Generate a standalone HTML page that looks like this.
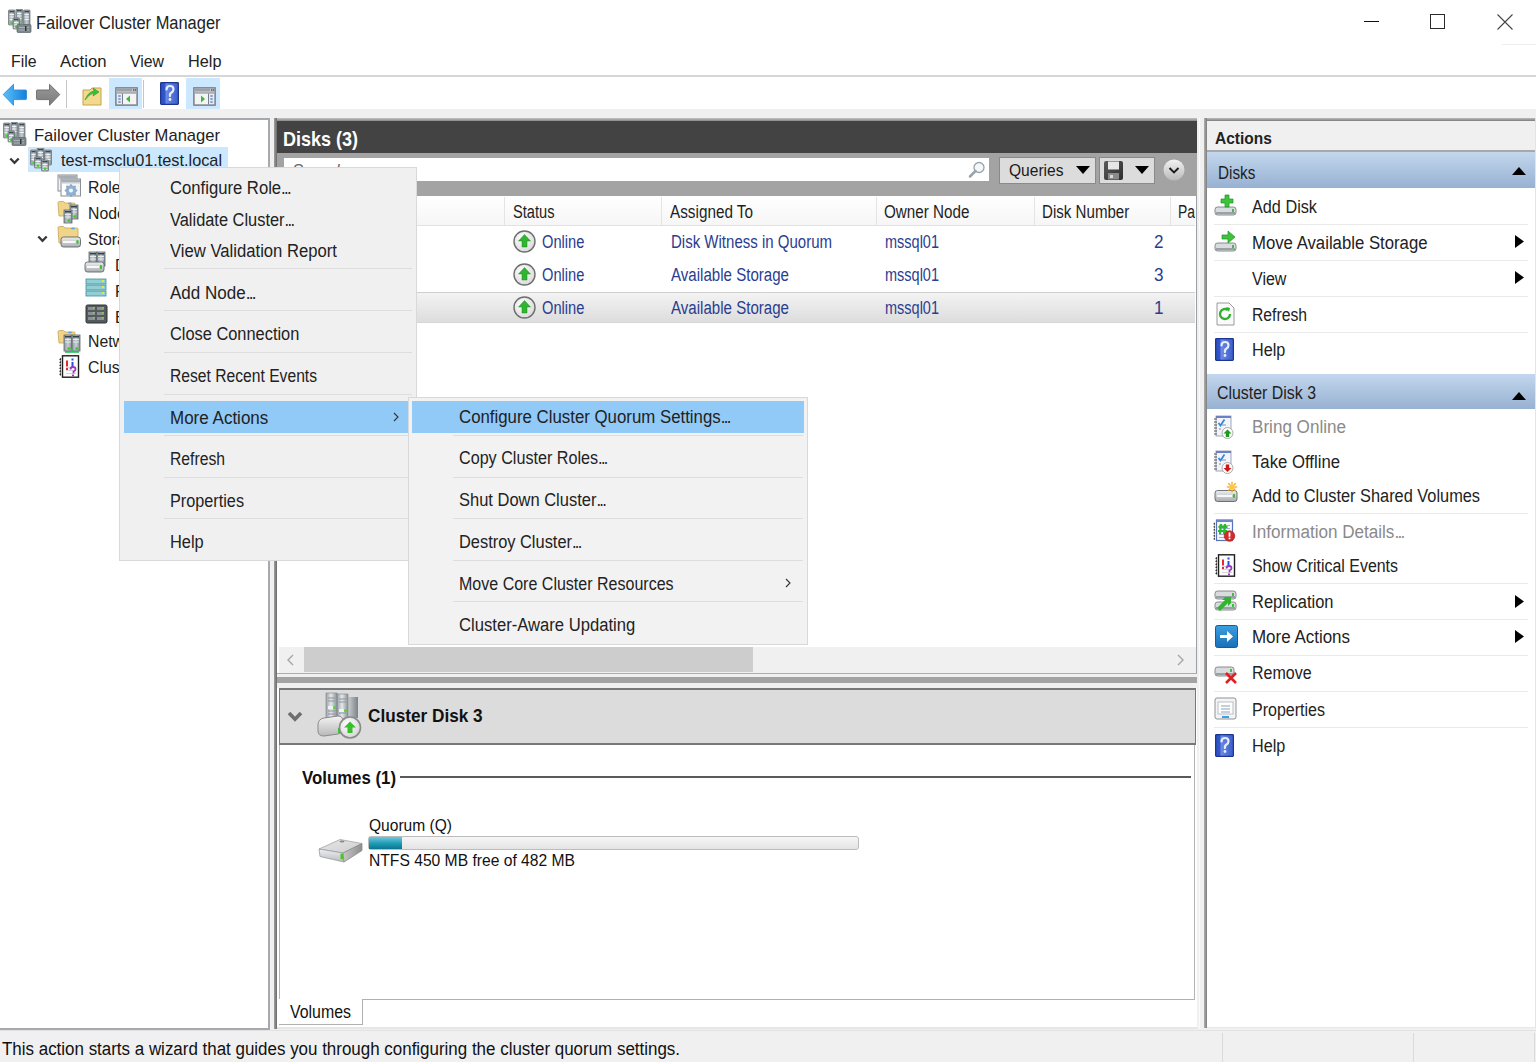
<!DOCTYPE html>
<html><head><meta charset="utf-8"><title>Failover Cluster Manager</title>
<style>
html,body{margin:0;padding:0;}
body{width:1536px;height:1062px;overflow:hidden;position:relative;background:#fff;font-family:"Liberation Sans", sans-serif;}
svg{display:block}
</style></head><body>
<svg style="position:absolute;left:8px;top:9px" width="24" height="24" viewBox="0 0 24 24"><defs><linearGradient id="gtow" x1="0" x2="1"><stop offset="0" stop-color="#8d979e"/><stop offset=".5" stop-color="#c9d0d4"/><stop offset="1" stop-color="#7f898f"/></linearGradient></defs><rect x="0.5" y="1" width="6.5" height="15" rx=".8" fill="url(#gtow)" stroke="#667077" stroke-width=".7"/><rect x="1.5" y="1.8" width="4.5" height="1.6" fill="#3d4a52"/><path d="M1.5 5.5h4.5M1.5 8h4.5M1.5 10.5h4.5" stroke="#eef2f4" stroke-width="1"/><circle cx="3.75" cy="13.8" r="1.5" fill="#48d23a"/><rect x="8" y="0" width="6.5" height="15" rx=".8" fill="url(#gtow)" stroke="#667077" stroke-width=".7"/><rect x="9" y="0.8" width="4.5" height="1.6" fill="#3d4a52"/><path d="M9 4.5h4.5M9 7h4.5M9 9.5h4.5" stroke="#eef2f4" stroke-width="1"/><circle cx="11.25" cy="12.8" r="1.5" fill="#48d23a"/><rect x="15.5" y="1" width="6.5" height="15" rx=".8" fill="url(#gtow)" stroke="#667077" stroke-width=".7"/><rect x="16.5" y="1.8" width="4.5" height="1.6" fill="#3d4a52"/><path d="M16.5 5.5h4.5M16.5 8h4.5M16.5 10.5h4.5" stroke="#eef2f4" stroke-width="1"/><rect x="5" y="9" width="6.5" height="11" rx=".8" fill="url(#gtow)" stroke="#667077" stroke-width=".7"/><rect x="6" y="9.8" width="4.5" height="1.6" fill="#3d4a52"/><path d="M6 13.5h4.5M6 16h4.5M6 18.5h4.5" stroke="#eef2f4" stroke-width="1"/><circle cx="8.25" cy="17.8" r="1.5" fill="#48d23a"/><rect x="9" y="15.5" width="14" height="8" rx="1" fill="#7d878d" stroke="#5b656b" stroke-width=".7"/><path d="M11 18.5h10M11 21h10" stroke="#a9b2b7" stroke-width="1"/><rect x="17" y="17" width="1.5" height="5" fill="#2e373c"/></svg>
<div style="position:absolute;left:36px;top:14px;font-size:18px;line-height:18px;color:#222;white-space:pre;transform-origin:0 0;transform:scaleX(0.9130);">Failover Cluster Manager</div>
<div style="position:absolute;left:1364px;top:21px;width:15px;height:1px;background:#111"></div>
<div style="position:absolute;left:1430px;top:14px;width:15px;height:15px;border:1px solid #2a2a2a;box-sizing:border-box"></div>
<svg style="position:absolute;left:1497px;top:14px" width="16" height="16" viewBox="0 0 16 16"><path d="M.5 .5L15.5 15.5M15.5 .5L.5 15.5" stroke="#444" stroke-width="1.1"/></svg>
<div style="position:absolute;left:1502px;top:44px;width:34px;height:1px;background:#eeeeee"></div>
<div style="position:absolute;left:11px;top:53px;font-size:17px;line-height:17px;color:#222;white-space:pre;transform-origin:0 0;transform:scaleX(0.9309);">File</div>
<div style="position:absolute;left:59.5px;top:53px;font-size:17px;line-height:17px;color:#222;white-space:pre;transform-origin:0 0;transform:scaleX(0.9841);">Action</div>
<div style="position:absolute;left:130px;top:53px;font-size:17px;line-height:17px;color:#222;white-space:pre;transform-origin:0 0;transform:scaleX(0.9304);">View</div>
<div style="position:absolute;left:187.5px;top:53px;font-size:17px;line-height:17px;color:#222;white-space:pre;transform-origin:0 0;transform:scaleX(0.9581);">Help</div>
<div style="position:absolute;left:0px;top:75px;width:1536px;height:2px;background:#d6d6d6"></div>
<svg style="position:absolute;left:2px;top:83px" width="26" height="24" viewBox="0 0 26 24"><defs><linearGradient id="gbk" x1="0" y1="0" x2="1" y2="0"><stop offset="0" stop-color="#5cc0f8"/><stop offset="1" stop-color="#1180dc"/></linearGradient></defs><path d="M1.2 11.5L11.5 1.3V7h12.2q.8 0 .8 .8v8q0 .8 -.8 .8H11.5v5.7z" fill="url(#gbk)" stroke="#2d8fd8" stroke-width=".9" stroke-linejoin="round"/></svg>
<svg style="position:absolute;left:35px;top:83px" width="26" height="24" viewBox="0 0 26 24"><defs><linearGradient id="gfw" x1="0" y1="0" x2="0" y2="1"><stop offset="0" stop-color="#9a9a9a"/><stop offset="1" stop-color="#7a7a7a"/></linearGradient></defs><path d="M24.8 11.5L14.5 1.3V7H2.3q-.8 0 -.8 .8v8q0 .8 .8 .8H14.5v5.7z" fill="url(#gfw)" stroke="#6a6a6a" stroke-width=".9" stroke-linejoin="round"/></svg>
<div style="position:absolute;left:66px;top:80px;width:1px;height:28px;background:#c4c4c4"></div>
<svg style="position:absolute;left:82px;top:85px" width="21" height="21" viewBox="0 0 21 21"><path d="M1 5h7l2 -2h9v17H1z" fill="#f3d98f" stroke="#c7a34a"/><path d="M3 15q3 -8 9 -9l-1 -3 6 4 -6 4 1 -3q-5 1 -9 7z" fill="#3bbf3b" stroke="#219a21" stroke-width=".6"/></svg>
<div style="position:absolute;left:109px;top:78px;width:33px;height:31px;background:#cce8ff"></div>
<svg style="position:absolute;left:115px;top:87px" width="23" height="19" viewBox="0 0 23 19"><rect x=".8" y=".8" width="21.4" height="17.4" fill="#c6cace" stroke="#7a7f87" stroke-width="1.3"/><rect x="2" y="2" width="15" height="2" fill="#9ba1a8"/><rect x="18" y="2" width="1.5" height="2" fill="#6c737a"/><rect x="20" y="2" width="1.2" height="2" fill="#6c737a"/><rect x="2" y="4.5" width="19" height="2" fill="#a9afb5"/><rect x="2" y="7" width="5" height="10" fill="#e8ecf0"/><path d="M7.5 6.5v11" stroke="#7a7f87" stroke-width="1"/><rect x="8" y="7" width="13" height="10" fill="#f4f4f4"/><path d="M11 12l4-3.5v7z" fill="#3cb83c"/><ellipse cx="4.5" cy="9" rx="1.5" ry="1" fill="#7aa0d8"/><ellipse cx="4.5" cy="12" rx="1.5" ry="1" fill="#7aa0d8"/><ellipse cx="4.5" cy="15" rx="1.5" ry="1" fill="#7aa0d8"/></svg>
<div style="position:absolute;left:143px;top:80px;width:1px;height:28px;background:#c4c4c4"></div>
<svg style="position:absolute;left:160px;top:82px" width="19" height="23" viewBox="0 0 19 23"><defs><linearGradient id="ghp" x1="0" y1="0" x2="1" y2="0"><stop offset="0" stop-color="#2a4fc0"/><stop offset=".25" stop-color="#3558c8"/><stop offset=".3" stop-color="#6a8ae6"/><stop offset="1" stop-color="#3b5cc8"/></linearGradient></defs><rect x=".6" y=".6" width="17.8" height="21.8" rx=".8" fill="url(#ghp)" stroke="#1d3590" stroke-width="1.2"/><path d="M6.5 7.5q0-3.5 3.5-3.5t3.5 3.3q0 2-2 3.2t-1.5 3.5" stroke="#e8ecf6" stroke-width="2.2" fill="none" stroke-linecap="round"/><circle cx="10" cy="17.5" r="1.4" fill="#e8ecf6"/></svg>
<div style="position:absolute;left:186px;top:78px;width:34px;height:31px;background:#cce8ff"></div>
<svg style="position:absolute;left:193px;top:87px" width="23" height="19" viewBox="0 0 23 19"><rect x=".8" y=".8" width="21.4" height="17.4" fill="#c6cace" stroke="#7a7f87" stroke-width="1.3"/><rect x="2" y="2" width="15" height="2" fill="#9ba1a8"/><rect x="18" y="2" width="1.5" height="2" fill="#6c737a"/><rect x="20" y="2" width="1.2" height="2" fill="#6c737a"/><rect x="2" y="4.5" width="19" height="2" fill="#a9afb5"/><rect x="16" y="7" width="5" height="10" fill="#e8ecf0"/><path d="M15.5 6.5v11" stroke="#7a7f87" stroke-width="1"/><rect x="2" y="7" width="13" height="10" fill="#f4f4f4"/><path d="M12 12l-4-3.5v7z" fill="#3cb83c"/><ellipse cx="18.5" cy="9" rx="1.5" ry="1" fill="#7aa0d8"/><ellipse cx="18.5" cy="12" rx="1.5" ry="1" fill="#7aa0d8"/><ellipse cx="18.5" cy="15" rx="1.5" ry="1" fill="#7aa0d8"/></svg>
<div style="position:absolute;left:0px;top:109px;width:1536px;height:921px;background:#f0f0f0"></div>
<div style="position:absolute;left:0px;top:118px;width:270px;height:912px;background:#fff;border-top:2px solid #a6aaaf;border-right:2px solid #a6aaaf;border-bottom:2px solid #a6aaaf;box-sizing:border-box"></div>
<svg style="position:absolute;left:3px;top:122px" width="24" height="24" viewBox="0 0 24 24"><defs><linearGradient id="gtow" x1="0" x2="1"><stop offset="0" stop-color="#8d979e"/><stop offset=".5" stop-color="#c9d0d4"/><stop offset="1" stop-color="#7f898f"/></linearGradient></defs><rect x="0.5" y="1" width="6.5" height="15" rx=".8" fill="url(#gtow)" stroke="#667077" stroke-width=".7"/><rect x="1.5" y="1.8" width="4.5" height="1.6" fill="#3d4a52"/><path d="M1.5 5.5h4.5M1.5 8h4.5M1.5 10.5h4.5" stroke="#eef2f4" stroke-width="1"/><circle cx="3.75" cy="13.8" r="1.5" fill="#48d23a"/><rect x="8" y="0" width="6.5" height="15" rx=".8" fill="url(#gtow)" stroke="#667077" stroke-width=".7"/><rect x="9" y="0.8" width="4.5" height="1.6" fill="#3d4a52"/><path d="M9 4.5h4.5M9 7h4.5M9 9.5h4.5" stroke="#eef2f4" stroke-width="1"/><circle cx="11.25" cy="12.8" r="1.5" fill="#48d23a"/><rect x="15.5" y="1" width="6.5" height="15" rx=".8" fill="url(#gtow)" stroke="#667077" stroke-width=".7"/><rect x="16.5" y="1.8" width="4.5" height="1.6" fill="#3d4a52"/><path d="M16.5 5.5h4.5M16.5 8h4.5M16.5 10.5h4.5" stroke="#eef2f4" stroke-width="1"/><rect x="5" y="9" width="6.5" height="11" rx=".8" fill="url(#gtow)" stroke="#667077" stroke-width=".7"/><rect x="6" y="9.8" width="4.5" height="1.6" fill="#3d4a52"/><path d="M6 13.5h4.5M6 16h4.5M6 18.5h4.5" stroke="#eef2f4" stroke-width="1"/><circle cx="8.25" cy="17.8" r="1.5" fill="#48d23a"/><rect x="9" y="15.5" width="14" height="8" rx="1" fill="#7d878d" stroke="#5b656b" stroke-width=".7"/><path d="M11 18.5h10M11 21h10" stroke="#a9b2b7" stroke-width="1"/><rect x="17" y="17" width="1.5" height="5" fill="#2e373c"/></svg>
<div style="position:absolute;left:34px;top:127px;font-size:17px;line-height:17px;color:#222;white-space:pre;transform-origin:0 0;transform:scaleX(0.9746);">Failover Cluster Manager</div>
<div style="position:absolute;left:28px;top:147px;width:200px;height:25px;background:#cce8ff"></div>
<svg style="position:absolute;left:9px;top:157px" width="11" height="8" viewBox="0 0 11 8"><path d="M1.3 1.5l4.2 4.3 4.2-4.3" stroke="#383838" stroke-width="2.3" fill="none"/></svg>
<svg style="position:absolute;left:30px;top:148px" width="23" height="24" viewBox="0 0 23 24"><defs><linearGradient id="gtow" x1="0" x2="1"><stop offset="0" stop-color="#8d979e"/><stop offset=".5" stop-color="#c9d0d4"/><stop offset="1" stop-color="#7f898f"/></linearGradient></defs><rect x="0.5" y="2" width="6" height="15" rx=".8" fill="url(#gtow)" stroke="#667077" stroke-width=".7"/><rect x="1.5" y="2.8" width="4" height="1.6" fill="#3d4a52"/><path d="M1.5 6.5h4M1.5 9h4M1.5 11.5h4" stroke="#eef2f4" stroke-width="1"/><circle cx="3.5" cy="14.8" r="1.5" fill="#48d23a"/><rect x="7" y="0" width="7" height="15" rx=".8" fill="url(#gtow)" stroke="#667077" stroke-width=".7"/><rect x="8" y="0.8" width="5" height="1.6" fill="#3d4a52"/><path d="M8 4.5h5M8 7h5M8 9.5h5" stroke="#eef2f4" stroke-width="1"/><circle cx="10.5" cy="12.8" r="1.5" fill="#48d23a"/><rect x="14.5" y="2" width="7" height="15" rx=".8" fill="url(#gtow)" stroke="#667077" stroke-width=".7"/><rect x="15.5" y="2.8" width="5" height="1.6" fill="#3d4a52"/><path d="M15.5 6.5h5M15.5 9h5M15.5 11.5h5" stroke="#eef2f4" stroke-width="1"/><circle cx="18.0" cy="14.8" r="1.5" fill="#48d23a"/><rect x="4.5" y="9" width="7" height="11" rx=".8" fill="url(#gtow)" stroke="#667077" stroke-width=".7"/><rect x="5.5" y="9.8" width="5" height="1.6" fill="#3d4a52"/><path d="M5.5 13.5h5M5.5 16h5M5.5 18.5h5" stroke="#eef2f4" stroke-width="1"/><circle cx="8.0" cy="17.8" r="1.5" fill="#48d23a"/><rect x="11.5" y="12" width="7" height="11" rx=".8" fill="url(#gtow)" stroke="#667077" stroke-width=".7"/><rect x="12.5" y="12.8" width="5" height="1.6" fill="#3d4a52"/><path d="M12.5 16.5h5M12.5 19h5M12.5 21.5h5" stroke="#eef2f4" stroke-width="1"/><circle cx="15.0" cy="20.8" r="1.5" fill="#48d23a"/></svg>
<div style="position:absolute;left:61px;top:152px;font-size:17px;line-height:17px;color:#222;white-space:pre;transform-origin:0 0;transform:scaleX(0.9573);">test-msclu01.test.local</div>
<svg style="position:absolute;left:57px;top:174px" width="25" height="25" viewBox="0 0 25 25"><rect x="1" y="1" width="19" height="16" fill="#f2f3f4" stroke="#8a9096" stroke-width="1"/><rect x="1.5" y="1.5" width="18" height="2.5" fill="#a6adb3"/><rect x="1.5" y="4" width="18" height="1.5" fill="#c9ced2"/><rect x="4" y="5" width="19.5" height="17" fill="#f2f3f4" stroke="#8a9096" stroke-width="1"/><rect x="4.5" y="5.5" width="18.5" height="2.5" fill="#a6adb3"/><rect x="4.5" y="8" width="18.5" height="1.5" fill="#c9ced2"/><rect x="5" y="10" width="4" height="11" fill="#fff"/><polygon points="20.20,16.50 18.12,18.21 18.38,20.88 15.71,20.62 14.00,22.70 12.29,20.62 9.62,20.88 9.88,18.21 7.80,16.50 9.88,14.79 9.62,12.12 12.29,12.38 14.00,10.30 15.71,12.38 18.38,12.12 18.12,14.79" fill="#8fb0d0" stroke="#6a8db0" stroke-width=".6" stroke-linejoin="round"/><circle cx="14" cy="16.5" r="1.98" fill="#f4f8fc"/></svg>
<div style="position:absolute;left:88px;top:179px;font-size:17px;line-height:17px;color:#222;white-space:pre;transform-origin:0 0;transform:scaleX(0.9300);">Roles</div>
<svg style="position:absolute;left:57px;top:200px" width="23" height="24" viewBox="0 0 23 24"><defs><linearGradient id="gtow" x1="0" x2="1"><stop offset="0" stop-color="#8d979e"/><stop offset=".5" stop-color="#c9d0d4"/><stop offset="1" stop-color="#7f898f"/></linearGradient></defs><path d="M1 3q0-1.5 1.5-1.5h4l1.5 1.5h9q1 0 1 1v12h-16z" fill="#f0d48a" stroke="#caa550" stroke-width=".8"/><ellipse cx="13" cy="3.5" rx="2" ry="1" fill="#6aa8e0"/><rect x="13" y="5" width="8" height="14" fill="url(#gtow)" stroke="#5f686d" stroke-width=".8"/><rect x="14" y="6" width="6" height="1.5" fill="#36424a"/><path d="M14 9.5h6M14 12h6" stroke="#e6ebee" stroke-width="1"/><circle cx="17.8" cy="16.5" r="1.6" fill="#43cc2e"/><rect x="7" y="10" width="8" height="13" fill="url(#gtow)" stroke="#5f686d" stroke-width=".8"/><rect x="8" y="11" width="6" height="1.5" fill="#36424a"/><path d="M8 14.5h6M8 17h6" stroke="#e6ebee" stroke-width="1"/><circle cx="11.8" cy="20.5" r="1.6" fill="#43cc2e"/></svg>
<div style="position:absolute;left:88px;top:205px;font-size:17px;line-height:17px;color:#222;white-space:pre;transform-origin:0 0;transform:scaleX(0.9300);">Nodes</div>
<svg style="position:absolute;left:36.5px;top:234.5px" width="11" height="8" viewBox="0 0 11 8"><path d="M1.3 1.5l4.2 4.3 4.2-4.3" stroke="#383838" stroke-width="2.3" fill="none"/></svg>
<svg style="position:absolute;left:57px;top:225px" width="24" height="24" viewBox="0 0 24 24"><path d="M1 3q0-1.5 1.5-1.5h4l1.5 1.5h12q1 0 1 1v14h-19z" fill="#f0d48a" stroke="#caa550" stroke-width=".8"/><ellipse cx="16" cy="3.5" rx="2" ry="1" fill="#6aa8e0"/><defs><linearGradient id="gdk412" x1="0" y1="0" x2="0" y2="1"><stop offset="0" stop-color="#eceeef"/><stop offset="1" stop-color="#a9aeb2"/></linearGradient></defs><rect x="4" y="12" width="19.5" height="10" rx="2.5" fill="url(#gdk412)" stroke="#62676b" stroke-width=".9"/><rect x="6" y="16.0" width="12.5" height="2" fill="#f8f8f8"/><rect x="19.5" y="15.2" width="2" height="3.6" fill="#37c22a"/></svg>
<div style="position:absolute;left:88px;top:231px;font-size:17px;line-height:17px;color:#222;white-space:pre;transform-origin:0 0;transform:scaleX(0.9300);">Storage</div>
<svg style="position:absolute;left:84px;top:251px" width="23" height="23" viewBox="0 0 23 23"><defs><linearGradient id="gtow" x1="0" x2="1"><stop offset="0" stop-color="#8d979e"/><stop offset=".5" stop-color="#c9d0d4"/><stop offset="1" stop-color="#7f898f"/></linearGradient></defs><rect x="5" y="1" width="8" height="14" fill="url(#gtow)" stroke="#5f686d" stroke-width=".8"/><rect x="6" y="2" width="6" height="1.5" fill="#36424a"/><path d="M6 5.5h6M6 8h6" stroke="#e6ebee" stroke-width="1"/><circle cx="9.8" cy="12.5" r="1.6" fill="#43cc2e"/><rect x="13" y="1" width="8" height="14" fill="url(#gtow)" stroke="#5f686d" stroke-width=".8"/><rect x="14" y="2" width="6" height="1.5" fill="#36424a"/><path d="M14 5.5h6M14 8h6" stroke="#e6ebee" stroke-width="1"/><circle cx="17.8" cy="12.5" r="1.6" fill="#43cc2e"/><defs><linearGradient id="gdk111" x1="0" y1="0" x2="0" y2="1"><stop offset="0" stop-color="#eceeef"/><stop offset="1" stop-color="#a9aeb2"/></linearGradient></defs><rect x="1" y="11" width="19" height="10" rx="2.5" fill="url(#gdk111)" stroke="#62676b" stroke-width=".9"/><rect x="3" y="15.0" width="12" height="2" fill="#f8f8f8"/><rect x="16" y="14.2" width="2" height="3.6" fill="#37c22a"/></svg>
<div style="position:absolute;left:115px;top:257px;font-size:17px;line-height:17px;color:#222;white-space:pre;transform-origin:0 0;transform:scaleX(0.9300);">Disks</div>
<svg style="position:absolute;left:85px;top:278px" width="22" height="20" viewBox="0 0 22 20"><rect x="1" y="1" width="20" height="5" fill="#8fd0d6" stroke="#3c8f98" stroke-width=".8"/><rect x="17" y="2" width="2" height="2" fill="#e7e73a"/><rect x="1" y="7" width="20" height="5" fill="#8fd0d6" stroke="#3c8f98" stroke-width=".8"/><rect x="17" y="8" width="2" height="2" fill="#e7e73a"/><rect x="1" y="13" width="20" height="5" fill="#8fd0d6" stroke="#3c8f98" stroke-width=".8"/><rect x="17" y="14" width="2" height="2" fill="#e7e73a"/></svg>
<div style="position:absolute;left:115px;top:283px;font-size:17px;line-height:17px;color:#222;white-space:pre;transform-origin:0 0;transform:scaleX(0.9300);">Pools</div>
<svg style="position:absolute;left:85px;top:304px" width="23" height="20" viewBox="0 0 23 20"><rect x="1" y="1" width="21" height="18" rx="1.5" fill="#545a5e" stroke="#2e3235"/><rect x="3" y="3" width="7" height="3" fill="#8a9094"/><rect x="8" y="3" width="1.5" height="1.5" fill="#8bd34a"/><rect x="12" y="3" width="7" height="3" fill="#8a9094"/><rect x="17" y="3" width="1.5" height="1.5" fill="#8bd34a"/><rect x="3" y="8" width="7" height="3" fill="#8a9094"/><rect x="8" y="8" width="1.5" height="1.5" fill="#8bd34a"/><rect x="12" y="8" width="7" height="3" fill="#8a9094"/><rect x="17" y="8" width="1.5" height="1.5" fill="#8bd34a"/><rect x="3" y="13" width="7" height="3" fill="#8a9094"/><rect x="8" y="13" width="1.5" height="1.5" fill="#8bd34a"/><rect x="12" y="13" width="7" height="3" fill="#8a9094"/><rect x="17" y="13" width="1.5" height="1.5" fill="#8bd34a"/></svg>
<div style="position:absolute;left:115px;top:309px;font-size:17px;line-height:17px;color:#222;white-space:pre;transform-origin:0 0;transform:scaleX(0.9300);">Enclosures</div>
<svg style="position:absolute;left:57px;top:329px" width="24" height="25" viewBox="0 0 24 25"><defs><linearGradient id="gtow" x1="0" x2="1"><stop offset="0" stop-color="#8d979e"/><stop offset=".5" stop-color="#c9d0d4"/><stop offset="1" stop-color="#7f898f"/></linearGradient></defs><path d="M1 3q0-1.5 1.5-1.5h4l1.5 1.5h9q1 0 1 1v10h-16z" fill="#f0d48a" stroke="#caa550" stroke-width=".8"/><ellipse cx="13" cy="3.5" rx="2" ry="1" fill="#6aa8e0"/><rect x="7" y="6" width="8" height="16" fill="url(#gtow)" stroke="#5f686d" stroke-width=".8"/><rect x="8" y="7" width="6" height="1.5" fill="#36424a"/><path d="M8 10.5h6M8 13h6" stroke="#e6ebee" stroke-width="1"/><circle cx="11.8" cy="19.5" r="1.6" fill="#43cc2e"/><rect x="15" y="6" width="8" height="16" fill="url(#gtow)" stroke="#5f686d" stroke-width=".8"/><rect x="16" y="7" width="6" height="1.5" fill="#36424a"/><path d="M16 10.5h6M16 13h6" stroke="#e6ebee" stroke-width="1"/><circle cx="19.8" cy="19.5" r="1.6" fill="#43cc2e"/><rect x="8" y="22" width="14" height="1.8" fill="#2bbf5a"/><rect x="14" y="20" width="2" height="3" fill="#2bbf5a"/></svg>
<div style="position:absolute;left:88px;top:333px;font-size:17px;line-height:17px;color:#222;white-space:pre;transform-origin:0 0;transform:scaleX(0.9300);">Networks</div>
<svg style="position:absolute;left:58px;top:355px" width="22" height="24" viewBox="0 0 22 24"><rect x="4.5" y=".8" width="16" height="21.4" fill="#fdfdfd" stroke="#1e1e1e" stroke-width="1.4"/><path d="M3 3.5q-2 .8 0 1.6M3 6.5q-2 .8 0 1.6M3 9.5q-2 .8 0 1.6M3 12.5q-2 .8 0 1.6M3 15.5q-2 .8 0 1.6M3 18.5q-2 .8 0 1.6" stroke="#222" stroke-width="1.3" fill="none"/><path d="M8 12.5h10M8 15.5h10M8 18.5h10" stroke="#c8c8d0" stroke-width=".8"/><path d="M9 5.5v6" stroke="#e42a2a" stroke-width="2"/><rect x="8" y="13" width="2" height="2" fill="#e42a2a"/><path d="M14.5 3.5v2M14.5 7v5" stroke="#2a4ee0" stroke-width="2"/><path d="M12.5 14.5q0-2.5 2.5-2.5t2.5 2.2q0 1.5-2 2.3v1.8" stroke="#9a3ab8" stroke-width="1.8" fill="none"/><rect x="14" y="19.5" width="2" height="1.8" fill="#9a3ab8"/></svg>
<div style="position:absolute;left:88px;top:359px;font-size:17px;line-height:17px;color:#222;white-space:pre;transform-origin:0 0;transform:scaleX(0.9300);">Cluster Events</div>
<div style="position:absolute;left:274px;top:118px;width:923px;height:911px;background:#fff"></div>
<div style="position:absolute;left:274px;top:118px;width:923px;height:3px;background:linear-gradient(#c4c4c4,#8a8a8a)"></div>
<div style="position:absolute;left:274px;top:118px;width:3px;height:911px;background:linear-gradient(90deg,#a0a0a0,#6a6a6a)"></div>
<div style="position:absolute;left:277px;top:121px;width:920px;height:32px;background:#434343"></div>
<div style="position:absolute;left:282.5px;top:129px;font-size:20.5px;line-height:20.5px;color:#fff;white-space:pre;transform-origin:0 0;transform:scaleX(0.8776);font-weight:bold;">Disks (3)</div>
<div style="position:absolute;left:277px;top:153px;width:920px;height:43px;background:#a3a3a3"></div>
<div style="position:absolute;left:284px;top:158px;width:705px;height:23px;background:#fff"></div>
<div style="position:absolute;left:291.5px;top:161px;font-size:19px;line-height:19px;color:#6a6a6a;white-space:pre;transform-origin:0 0;transform:scaleX(0.8804);font-style:italic;">Search</div>
<svg style="position:absolute;left:968px;top:161px" width="18" height="18" viewBox="0 0 18 18"><circle cx="11" cy="6.5" r="5" fill="#f4f8fb" stroke="#9aa3aa" stroke-width="1.3"/><path d="M7.5 10L2 15.5" stroke="#9aa3aa" stroke-width="2.5" stroke-linecap="round"/></svg>
<div style="position:absolute;left:999px;top:157px;width:97px;height:27px;background:#dcdcdc;border:1px solid #8a8a8a;box-sizing:border-box"></div>
<div style="position:absolute;left:1009px;top:162px;font-size:17px;line-height:17px;color:#1a1a1a;white-space:pre;transform-origin:0 0;transform:scaleX(0.9156);">Queries</div>
<svg style="position:absolute;left:1076px;top:166px" width="14" height="8" viewBox="0 0 14 8"><path d="M0 0h14L7 8z" fill="#000"/></svg>
<div style="position:absolute;left:1099px;top:157px;width:56px;height:27px;background:#dcdcdc;border:1px solid #8a8a8a;box-sizing:border-box"></div>
<svg style="position:absolute;left:1103px;top:160px" width="21" height="21" viewBox="0 0 21 21"><defs><linearGradient id="gfl" x1="0" y1="0" x2="1" y2="1"><stop offset="0" stop-color="#5a5a5a"/><stop offset="1" stop-color="#2e2e2e"/></linearGradient></defs><rect x="1" y="1" width="19" height="19" rx="2" fill="url(#gfl)"/><rect x="5" y="1.5" width="11" height="8" fill="#e6e6e6"/><rect x="5" y="13" width="11" height="6.5" fill="#8a8a8a"/><rect x="7" y="15" width="3" height="3" fill="#d8d8d8"/></svg>
<svg style="position:absolute;left:1135px;top:166px" width="14" height="8" viewBox="0 0 14 8"><path d="M0 0h14L7 8z" fill="#000"/></svg>
<svg style="position:absolute;left:1163px;top:159px" width="22" height="22" viewBox="0 0 22 22"><defs><linearGradient id="gc" x1="0" y1="0" x2="0" y2="1"><stop offset="0" stop-color="#f2f2f2"/><stop offset="1" stop-color="#b9b9b9"/></linearGradient></defs><circle cx="11" cy="11" r="10.5" fill="url(#gc)"/><path d="M6.5 9l4.5 4.5 4.5-4.5" stroke="#1a1a1a" stroke-width="1.9" fill="none"/></svg>
<div style="position:absolute;left:277px;top:196px;width:920px;height:478px;background:#fff"></div>
<div style="position:absolute;left:277px;top:196px;width:918px;height:30px;background:linear-gradient(#ffffff,#f6f6f6);border-bottom:1px solid #e2e2e2;box-sizing:border-box"></div>
<div style="position:absolute;left:504px;top:197px;width:1px;height:28px;background:#e4e4e4"></div>
<div style="position:absolute;left:661px;top:197px;width:1px;height:28px;background:#e4e4e4"></div>
<div style="position:absolute;left:876px;top:197px;width:1px;height:28px;background:#e4e4e4"></div>
<div style="position:absolute;left:1034px;top:197px;width:1px;height:28px;background:#e4e4e4"></div>
<div style="position:absolute;left:1170px;top:197px;width:1px;height:28px;background:#e4e4e4"></div>
<div style="position:absolute;left:512.5px;top:203px;font-size:18px;line-height:18px;color:#1e1e1e;white-space:pre;transform-origin:0 0;transform:scaleX(0.8132);">Status</div>
<div style="position:absolute;left:670px;top:203px;font-size:18px;line-height:18px;color:#1e1e1e;white-space:pre;transform-origin:0 0;transform:scaleX(0.8492);">Assigned To</div>
<div style="position:absolute;left:883.6px;top:203px;font-size:18px;line-height:18px;color:#1e1e1e;white-space:pre;transform-origin:0 0;transform:scaleX(0.8451);">Owner Node</div>
<div style="position:absolute;left:1042px;top:203px;font-size:18px;line-height:18px;color:#1e1e1e;white-space:pre;transform-origin:0 0;transform:scaleX(0.8393);">Disk Number</div>
<div style="position:absolute;left:1178px;top:203px;font-size:18px;line-height:18px;color:#1e1e1e;white-space:pre;transform-origin:0 0;transform:scaleX(0.7721);">Pa</div>
<div style="position:absolute;left:1195px;top:196px;width:2px;height:478px;background:#fff"></div>
<div style="position:absolute;left:277px;top:292px;width:918px;height:31px;background:linear-gradient(#f3f3f3,#dddddd);border-top:1px solid #cfcfcf;border-bottom:1px solid #d6d6d6;box-sizing:border-box"></div>
<svg style="position:absolute;left:513px;top:230px" width="23" height="23" viewBox="0 0 23 23"><defs><radialGradient id="go" cx=".4" cy=".35" r=".7"><stop offset="0" stop-color="#ffffff"/><stop offset="1" stop-color="#d8d8d8"/></radialGradient></defs>
<circle cx="11.5" cy="11.5" r="10.5" fill="url(#go)" stroke="#6f6f6f" stroke-width="1.4"/>
<path d="M11.5 4.5l6 6.5h-3.5v6h-5v-6h-3.5z" fill="#2fb52f" stroke="#1e8a1e" stroke-width=".5"/></svg>
<div style="position:absolute;left:541.6px;top:233px;font-size:18px;line-height:18px;color:#2a3d8f;white-space:pre;transform-origin:0 0;transform:scaleX(0.8149);">Online</div>
<div style="position:absolute;left:671px;top:233px;font-size:18px;line-height:18px;color:#2a3d8f;white-space:pre;transform-origin:0 0;transform:scaleX(0.8340);">Disk Witness in Quorum</div>
<div style="position:absolute;left:885px;top:233px;font-size:18px;line-height:18px;color:#2a3d8f;white-space:pre;transform-origin:0 0;transform:scaleX(0.8056);">mssql01</div>
<div style="position:absolute;left:1153.6px;top:233px;font-size:18px;line-height:18px;color:#2a3d8f;white-space:pre;transform-origin:0 0;transform:scaleX(0.9500);">2</div>
<svg style="position:absolute;left:513px;top:263px" width="23" height="23" viewBox="0 0 23 23"><defs><radialGradient id="go" cx=".4" cy=".35" r=".7"><stop offset="0" stop-color="#ffffff"/><stop offset="1" stop-color="#d8d8d8"/></radialGradient></defs>
<circle cx="11.5" cy="11.5" r="10.5" fill="url(#go)" stroke="#6f6f6f" stroke-width="1.4"/>
<path d="M11.5 4.5l6 6.5h-3.5v6h-5v-6h-3.5z" fill="#2fb52f" stroke="#1e8a1e" stroke-width=".5"/></svg>
<div style="position:absolute;left:541.6px;top:266px;font-size:18px;line-height:18px;color:#2a3d8f;white-space:pre;transform-origin:0 0;transform:scaleX(0.8149);">Online</div>
<div style="position:absolute;left:671px;top:266px;font-size:18px;line-height:18px;color:#2a3d8f;white-space:pre;transform-origin:0 0;transform:scaleX(0.8383);">Available Storage</div>
<div style="position:absolute;left:885px;top:266px;font-size:18px;line-height:18px;color:#2a3d8f;white-space:pre;transform-origin:0 0;transform:scaleX(0.8056);">mssql01</div>
<div style="position:absolute;left:1153.6px;top:266px;font-size:18px;line-height:18px;color:#2a3d8f;white-space:pre;transform-origin:0 0;transform:scaleX(0.9500);">3</div>
<svg style="position:absolute;left:513px;top:296px" width="23" height="23" viewBox="0 0 23 23"><defs><radialGradient id="go" cx=".4" cy=".35" r=".7"><stop offset="0" stop-color="#ffffff"/><stop offset="1" stop-color="#d8d8d8"/></radialGradient></defs>
<circle cx="11.5" cy="11.5" r="10.5" fill="url(#go)" stroke="#6f6f6f" stroke-width="1.4"/>
<path d="M11.5 4.5l6 6.5h-3.5v6h-5v-6h-3.5z" fill="#2fb52f" stroke="#1e8a1e" stroke-width=".5"/></svg>
<div style="position:absolute;left:541.6px;top:299px;font-size:18px;line-height:18px;color:#2a3d8f;white-space:pre;transform-origin:0 0;transform:scaleX(0.8149);">Online</div>
<div style="position:absolute;left:671px;top:299px;font-size:18px;line-height:18px;color:#2a3d8f;white-space:pre;transform-origin:0 0;transform:scaleX(0.8383);">Available Storage</div>
<div style="position:absolute;left:885px;top:299px;font-size:18px;line-height:18px;color:#2a3d8f;white-space:pre;transform-origin:0 0;transform:scaleX(0.8056);">mssql01</div>
<div style="position:absolute;left:1153.6px;top:299px;font-size:18px;line-height:18px;color:#2a3d8f;white-space:pre;transform-origin:0 0;transform:scaleX(0.9500);">1</div>
<div style="position:absolute;left:1196px;top:196px;width:1px;height:478px;background:#9aa0a6"></div>
<div style="position:absolute;left:279px;top:647px;width:917px;height:26px;background:#f0f0f0"></div>
<div style="position:absolute;left:304px;top:647px;width:449px;height:25px;background:#cdcdcd"></div>
<svg style="position:absolute;left:286px;top:654px" width="8" height="12" viewBox="0 0 8 12"><path d="M7 1L2 6l5 5" stroke="#a6a6a6" stroke-width="1.4" fill="none"/></svg>
<svg style="position:absolute;left:1177px;top:654px" width="8" height="12" viewBox="0 0 8 12"><path d="M1 1l5 5-5 5" stroke="#a6a6a6" stroke-width="1.4" fill="none"/></svg>
<div style="position:absolute;left:277px;top:673px;width:920px;height:1px;background:#a9aeb3"></div>
<div style="position:absolute;left:277px;top:674px;width:920px;height:14px;background:#f0f0f0"></div>
<div style="position:absolute;left:277px;top:677px;width:920px;height:6px;background:#a3a3a3"></div>
<div style="position:absolute;left:279px;top:688px;width:917px;height:57px;background:#dcdcdc;border:2px solid #787878;border-left-width:1px;border-right-width:1px;box-sizing:border-box"></div>
<svg style="position:absolute;left:287px;top:710px" width="16" height="12" viewBox="0 0 16 12"><path d="M2 3l6 6.2 6-6.2" stroke="#6e6e6e" stroke-width="3.6" fill="none" stroke-linejoin="miter"/></svg>
<svg style="position:absolute;left:312px;top:688px" width="56" height="56" viewBox="0 0 56 56">
<defs>
<linearGradient id="gsrv" x1="0" x2="1"><stop offset="0" stop-color="#9aa0a6"/><stop offset=".45" stop-color="#e4e8ec"/><stop offset="1" stop-color="#8a9096"/></linearGradient>
<linearGradient id="gsrv2" x1="0" x2="1"><stop offset="0" stop-color="#c9cdd0"/><stop offset="1" stop-color="#7c8287"/></linearGradient>
<linearGradient id="gdsk" x1="0" y1="0" x2="0" y2="1"><stop offset="0" stop-color="#f4f4f4"/><stop offset="1" stop-color="#b8b8b8"/></linearGradient>
<radialGradient id="gcir" cx=".4" cy=".35" r=".75"><stop offset="0" stop-color="#ffffff"/><stop offset="1" stop-color="#d0d0d0"/></radialGradient>
</defs>
<rect x="36" y="9" width="10" height="21" fill="url(#gsrv2)"/>
<rect x="25" y="6" width="11" height="25" fill="url(#gsrv)" stroke="#7d848a" stroke-width=".6"/>
<rect x="14" y="5" width="11" height="27" fill="url(#gsrv)" stroke="#7d848a" stroke-width=".6"/>
<path d="M16 10h7M16 13h7M16 23h7M16 26h7M27 11h7M27 14h7M27 25h7" stroke="#8d959b" stroke-width="1"/>
<rect x="16" y="18" width="5" height="3" fill="#eef3f6"/><circle cx="22.5" cy="19.5" r="1.6" fill="#5fd03a"/>
<rect x="27" y="21" width="5" height="3" fill="#eef3f6"/><circle cx="33.5" cy="22.5" r="1.6" fill="#5fd03a"/>
<path d="M6 37q0 -6 6 -7l14 -2q5 0 5 6v6q0 5 -5 6l-14 2q-6 0 -6 -5z" fill="url(#gdsk)" stroke="#8a8a8a" stroke-width="1"/>
<rect x="26" y="40" width="2" height="5" fill="#3fbf3f"/>
<circle cx="38" cy="39.5" r="10.5" fill="url(#gcir)" stroke="#8a8a8a" stroke-width="1.6"/>
<path d="M38 33.5l6 6h-3.5v5.5h-5v-5.5H32z" fill="#3cbd2e"/>
</svg>
<div style="position:absolute;left:368px;top:707px;font-size:18px;line-height:18px;color:#111;white-space:pre;transform-origin:0 0;transform:scaleX(0.9546);font-weight:bold;">Cluster Disk 3</div>
<div style="position:absolute;left:279px;top:745px;width:916px;height:254px;background:#fff;border-right:1px solid #c8c8c8;box-sizing:border-box"></div>
<div style="position:absolute;left:302px;top:769px;font-size:18px;line-height:18px;color:#111;white-space:pre;transform-origin:0 0;transform:scaleX(0.9336);font-weight:bold;">Volumes (1)</div>
<div style="position:absolute;left:400px;top:776px;width:791px;height:2px;background:#5a5a5a"></div>
<svg style="position:absolute;left:312px;top:830px" width="56" height="40" viewBox="0 0 56 40">
<defs><linearGradient id="gdrt" x1="0" y1="0" x2="1" y2="1"><stop offset="0" stop-color="#e6e6e6"/><stop offset="1" stop-color="#cfcfcf"/></linearGradient>
<linearGradient id="gdrf" x1="0" y1="0" x2="0" y2="1"><stop offset="0" stop-color="#eef0f6"/><stop offset="1" stop-color="#b9bbbf"/></linearGradient>
<linearGradient id="gdrr" x1="0" y1="0" x2="1" y2="0"><stop offset="0" stop-color="#c8c8c8"/><stop offset="1" stop-color="#8e8e8e"/></linearGradient></defs>
<path d="M7 19L28 9.5L50 13.5L31 23z" fill="url(#gdrt)" stroke="#a4a4a4" stroke-width=".8"/>
<path d="M7 19L31 23L32 32L8 26.5z" fill="url(#gdrf)" stroke="#9a9a9a" stroke-width=".8"/>
<path d="M31 23L50 13.5L50 20.5L32 32z" fill="url(#gdrr)" stroke="#8a8a8a" stroke-width=".8"/>
<path d="M28.5 23.5l2.5 .4v5.5l-2.5 -.5z" fill="#4cc51f"/>
<ellipse cx="30" cy="11.5" rx="2.5" ry="1" fill="#8a8a8a"/>
</svg>
<div style="position:absolute;left:369px;top:817px;font-size:17px;line-height:17px;color:#111;white-space:pre;transform-origin:0 0;transform:scaleX(0.9153);">Quorum (Q)</div>
<div style="position:absolute;left:368px;top:836px;width:491px;height:14px;background:linear-gradient(#f6f6f6,#e4e4e4);border:1px solid #bcbcbc;box-sizing:border-box;border-radius:3px"></div>
<div style="position:absolute;left:369px;top:837px;width:33px;height:12px;background:linear-gradient(#6cc8dc,#1e9ab4 55%,#0b7590)"></div>
<div style="position:absolute;left:369px;top:852px;font-size:17px;line-height:17px;color:#111;white-space:pre;transform-origin:0 0;transform:scaleX(0.9200);">NTFS 450 MB free of 482 MB</div>
<div style="position:absolute;left:362px;top:999px;width:833px;height:1px;background:#b0b0b0"></div>
<div style="position:absolute;left:1194px;top:745px;width:1px;height:255px;background:#b4b4b4"></div>
<div style="position:absolute;left:279px;top:745px;width:1px;height:280px;background:#b4b4b4"></div>
<div style="position:absolute;left:279px;top:999px;width:84px;height:26px;background:#fff;border-right:1px solid #b0b0b0;border-bottom:1px solid #b0b0b0;box-sizing:border-box"></div>
<div style="position:absolute;left:289.8px;top:1003px;font-size:18px;line-height:18px;color:#111;white-space:pre;transform-origin:0 0;transform:scaleX(0.8836);">Volumes</div>
<div style="position:absolute;left:277px;top:1027px;width:920px;height:2px;background:#e6e6e6"></div>
<div style="position:absolute;left:1199px;top:118px;width:1px;height:910px;background:#fbfbfb"></div>
<div style="position:absolute;left:1204px;top:118px;width:332px;height:909px;background:#fff"></div>
<div style="position:absolute;left:1204px;top:1027px;width:332px;height:1px;background:#e8e8e8"></div>
<div style="position:absolute;left:1204px;top:118px;width:332px;height:3px;background:linear-gradient(#bdbdbd,#7d7d7d)"></div>
<div style="position:absolute;left:1204px;top:118px;width:3px;height:910px;background:linear-gradient(90deg,#b0b0b0,#7d7d7d)"></div>
<div style="position:absolute;left:1535px;top:118px;width:1px;height:910px;background:#e4e4e4"></div>
<div style="position:absolute;left:1207px;top:121px;width:328px;height:29px;background:#f0f0f0"></div>
<div style="position:absolute;left:1207px;top:150px;width:328px;height:2px;background:#a8a8a8"></div>
<div style="position:absolute;left:1214.7px;top:130px;font-size:17px;line-height:17px;color:#222;white-space:pre;transform-origin:0 0;transform:scaleX(0.9111);font-weight:bold;">Actions</div>
<div style="position:absolute;left:1207px;top:152px;width:328px;height:36px;background:linear-gradient(#c3d7ee,#97b1d1)"></div>
<div style="position:absolute;left:1217.7px;top:164px;font-size:18px;line-height:18px;color:#1e1e1e;white-space:pre;transform-origin:0 0;transform:scaleX(0.8478);">Disks</div>
<svg style="position:absolute;left:1512px;top:167px" width="14" height="8" viewBox="0 0 14 8"><path d="M0 8L7 0l7 8z" fill="#000"/></svg>
<div style="position:absolute;left:1207px;top:374px;width:328px;height:35px;background:linear-gradient(#c3d7ee,#97b1d1)"></div>
<div style="position:absolute;left:1217px;top:384px;font-size:18px;line-height:18px;color:#1e1e1e;white-space:pre;transform-origin:0 0;transform:scaleX(0.8837);">Cluster Disk 3</div>
<svg style="position:absolute;left:1512px;top:392px" width="14" height="8" viewBox="0 0 14 8"><path d="M0 8L7 0l7 8z" fill="#000"/></svg>
<div style="position:absolute;left:1252px;top:198px;font-size:18px;line-height:18px;color:#222;white-space:pre;transform-origin:0 0;transform:scaleX(0.9024);">Add Disk</div>
<div style="position:absolute;left:1214px;top:224px;width:314px;height:1px;background:#e9e9e9"></div>
<div style="position:absolute;left:1252px;top:234px;font-size:18px;line-height:18px;color:#222;white-space:pre;transform-origin:0 0;transform:scaleX(0.9296);">Move Available Storage</div>
<div style="position:absolute;left:1214px;top:260px;width:314px;height:1px;background:#e9e9e9"></div>
<div style="position:absolute;left:1252px;top:270px;font-size:18px;line-height:18px;color:#222;white-space:pre;transform-origin:0 0;transform:scaleX(0.8891);">View</div>
<div style="position:absolute;left:1214px;top:295.5px;width:314px;height:1px;background:#e9e9e9"></div>
<div style="position:absolute;left:1252px;top:306px;font-size:18px;line-height:18px;color:#222;white-space:pre;transform-origin:0 0;transform:scaleX(0.8726);">Refresh</div>
<div style="position:absolute;left:1214px;top:331.5px;width:314px;height:1px;background:#e9e9e9"></div>
<div style="position:absolute;left:1252px;top:341px;font-size:18px;line-height:18px;color:#222;white-space:pre;transform-origin:0 0;transform:scaleX(0.8995);">Help</div>
<svg style="position:absolute;left:1515px;top:235px" width="9" height="13" viewBox="0 0 9 13"><path d="M0 0L9 6.5 0 13z" fill="#000"/></svg>
<svg style="position:absolute;left:1515px;top:271px" width="9" height="13" viewBox="0 0 9 13"><path d="M0 0L9 6.5 0 13z" fill="#000"/></svg>
<div style="position:absolute;left:1252px;top:418px;font-size:18px;line-height:18px;color:#8a8a8a;white-space:pre;transform-origin:0 0;transform:scaleX(0.9490);">Bring Online</div>
<div style="position:absolute;left:1252px;top:453px;font-size:18px;line-height:18px;color:#222;white-space:pre;transform-origin:0 0;transform:scaleX(0.9290);">Take Offline</div>
<div style="position:absolute;left:1252px;top:487px;font-size:18px;line-height:18px;color:#222;white-space:pre;transform-origin:0 0;transform:scaleX(0.9079);">Add to Cluster Shared Volumes</div>
<div style="position:absolute;left:1214px;top:513.2px;width:314px;height:1px;background:#e9e9e9"></div>
<div style="position:absolute;left:1252px;top:523px;font-size:18px;line-height:18px;color:#8a8a8a;white-space:pre;transform-origin:0 0;transform:scaleX(0.9488);">Information Details<span style="letter-spacing:-1.8px">...</span></div>
<div style="position:absolute;left:1252px;top:557px;font-size:18px;line-height:18px;color:#222;white-space:pre;transform-origin:0 0;transform:scaleX(0.8845);">Show Critical Events</div>
<div style="position:absolute;left:1214px;top:583.2px;width:314px;height:1px;background:#e9e9e9"></div>
<div style="position:absolute;left:1252px;top:593px;font-size:18px;line-height:18px;color:#222;white-space:pre;transform-origin:0 0;transform:scaleX(0.9152);">Replication</div>
<div style="position:absolute;left:1214px;top:619.3px;width:314px;height:1px;background:#e9e9e9"></div>
<div style="position:absolute;left:1252px;top:628px;font-size:18px;line-height:18px;color:#222;white-space:pre;transform-origin:0 0;transform:scaleX(0.9419);">More Actions</div>
<div style="position:absolute;left:1214px;top:654.9px;width:314px;height:1px;background:#e9e9e9"></div>
<div style="position:absolute;left:1252px;top:664px;font-size:18px;line-height:18px;color:#222;white-space:pre;transform-origin:0 0;transform:scaleX(0.8892);">Remove</div>
<div style="position:absolute;left:1214px;top:691.0px;width:314px;height:1px;background:#e9e9e9"></div>
<div style="position:absolute;left:1252px;top:701px;font-size:18px;line-height:18px;color:#222;white-space:pre;transform-origin:0 0;transform:scaleX(0.8898);">Properties</div>
<div style="position:absolute;left:1214px;top:727.1px;width:314px;height:1px;background:#e9e9e9"></div>
<div style="position:absolute;left:1252px;top:737px;font-size:18px;line-height:18px;color:#222;white-space:pre;transform-origin:0 0;transform:scaleX(0.8995);">Help</div>
<svg style="position:absolute;left:1515px;top:595px" width="9" height="13" viewBox="0 0 9 13"><path d="M0 0L9 6.5 0 13z" fill="#000"/></svg>
<svg style="position:absolute;left:1515px;top:630px" width="9" height="13" viewBox="0 0 9 13"><path d="M0 0L9 6.5 0 13z" fill="#000"/></svg>
<svg style="position:absolute;left:1214px;top:194px" width="24" height="24" viewBox="0 0 24 24"><rect x="1" y="13" width="21" height="8" rx="2.5" fill="#d8dcdf" stroke="#6d7277" stroke-width=".8"/><rect x="2" y="18" width="19" height="2" fill="#9aa0a4"/><rect x="18" y="15" width="2" height="3" fill="#39c339"/><path d="M11 1h4v4h4v4h-4v4h-4v-4H7V5h4z" fill="#3cc43c" stroke="#1f8f1f" stroke-width=".7"/></svg>
<svg style="position:absolute;left:1214px;top:230px" width="24" height="24" viewBox="0 0 24 24"><rect x="1" y="13" width="21" height="8" rx="2.5" fill="#d8dcdf" stroke="#6d7277" stroke-width=".8"/><rect x="2" y="18" width="19" height="2" fill="#9aa0a4"/><rect x="18" y="15" width="2" height="3" fill="#39c339"/><path d="M8 5h6V1l7 6-7 6V9H8z" fill="#3cc43c" stroke="#1f8f1f" stroke-width=".7"/></svg>
<svg style="position:absolute;left:1216px;top:302px" width="20" height="24" viewBox="0 0 20 24"><path d="M1 1h12l5 5v17H1z" fill="#fafafa" stroke="#9a9a9a"/><path d="M14 12a5 5 0 1 1 -2 -4" stroke="#2fae2f" stroke-width="2.4" fill="none"/><path d="M10 5l4 1-1 4z" fill="#2fae2f"/></svg>
<svg style="position:absolute;left:1215px;top:338px" width="19" height="23" viewBox="0 0 19 23"><defs><linearGradient id="ghp" x1="0" y1="0" x2="1" y2="0"><stop offset="0" stop-color="#2a4fc0"/><stop offset=".25" stop-color="#3558c8"/><stop offset=".3" stop-color="#6a8ae6"/><stop offset="1" stop-color="#3b5cc8"/></linearGradient></defs><rect x=".6" y=".6" width="17.8" height="21.8" rx=".8" fill="url(#ghp)" stroke="#1d3590" stroke-width="1.2"/><path d="M6.5 7.5q0-3.5 3.5-3.5t3.5 3.3q0 2-2 3.2t-1.5 3.5" stroke="#e8ecf6" stroke-width="2.2" fill="none" stroke-linecap="round"/><circle cx="10" cy="17.5" r="1.4" fill="#e8ecf6"/></svg>
<svg style="position:absolute;left:1212px;top:415px" width="22" height="24" viewBox="0 0 22 24"><rect x="4" y="1" width="15" height="20" fill="#f1f4fa" stroke="#8a92a6" stroke-width=".8"/><rect x="4" y="1" width="15" height="2" fill="#6d7fc4"/><path d="M2 4h3M2 7h3M2 10h3M2 13h3M2 16h3M2 19h3" stroke="#555" stroke-width="1"/><path d="M6.5 8l2 2.5l4 -6" stroke="#2f8ad8" stroke-width="1.8" fill="none"/><path d="M10 10h4" stroke="#8a8fb0" stroke-width="1"/><rect x="7" y="13" width="2" height="2" fill="#c0c0c0"/><circle cx="15.5" cy="18" r="5.5" fill="#fafafa" stroke="#9a9a9a" stroke-width=".8"/><path d="M15.5 14.5l4 4h-2.3v3.5h-3.4v-3.5h-2.3z" fill="#1d9a1d"/></svg>
<svg style="position:absolute;left:1212px;top:450px" width="22" height="24" viewBox="0 0 22 24"><rect x="4" y="1" width="15" height="20" fill="#f1f4fa" stroke="#8a92a6" stroke-width=".8"/><rect x="4" y="1" width="15" height="2" fill="#6d7fc4"/><path d="M2 4h3M2 7h3M2 10h3M2 13h3M2 16h3M2 19h3" stroke="#555" stroke-width="1"/><path d="M6.5 8l2 2.5l4 -6" stroke="#2f8ad8" stroke-width="1.8" fill="none"/><path d="M10 10h4" stroke="#8a8fb0" stroke-width="1"/><rect x="7" y="13" width="2" height="2" fill="#c0c0c0"/><circle cx="15.5" cy="18" r="5.5" fill="#fafafa" stroke="#9a9a9a" stroke-width=".8"/><path d="M15.5 22l4 -4h-2.3v-3.5h-3.4v3.5h-2.3z" fill="#c81818"/></svg>
<svg style="position:absolute;left:1214px;top:481px" width="24" height="22" viewBox="0 0 24 22"><defs><linearGradient id="gdk19.5" x1="0" y1="0" x2="0" y2="1"><stop offset="0" stop-color="#eceeef"/><stop offset="1" stop-color="#a9aeb2"/></linearGradient></defs><rect x="1" y="9.5" width="22" height="11" rx="2.5" fill="url(#gdk19.5)" stroke="#62676b" stroke-width=".9"/><rect x="3" y="14.0" width="15" height="2" fill="#f8f8f8"/><rect x="19" y="13.2" width="2" height="3.6" fill="#37c22a"/><circle cx="18" cy="6" r="2.6" fill="#ffc83a"/><path d="M20.50 6.00L23.20 6.00" stroke="#f5a623" stroke-width="1.3"/><path d="M19.77 7.77L21.68 9.68" stroke="#f5a623" stroke-width="1.3"/><path d="M18.00 8.50L18.00 11.20" stroke="#f5a623" stroke-width="1.3"/><path d="M16.23 7.77L14.32 9.68" stroke="#f5a623" stroke-width="1.3"/><path d="M15.50 6.00L12.80 6.00" stroke="#f5a623" stroke-width="1.3"/><path d="M16.23 4.23L14.32 2.32" stroke="#f5a623" stroke-width="1.3"/><path d="M18.00 3.50L18.00 0.80" stroke="#f5a623" stroke-width="1.3"/><path d="M19.77 4.23L21.68 2.32" stroke="#f5a623" stroke-width="1.3"/></svg>
<svg style="position:absolute;left:1212px;top:519px" width="24" height="24" viewBox="0 0 24 24"><rect x="4.5" y="1" width="16" height="20.5" fill="#f6f8fc" stroke="#5a72b8" stroke-width="1.2"/><rect x="4.5" y="1" width="16" height="2" fill="#6e86c8"/><path d="M3 4q-2 .8 0 1.6M3 7q-2 .8 0 1.6M3 10q-2 .8 0 1.6M3 13q-2 .8 0 1.6M3 16q-2 .8 0 1.6M3 19q-2 .8 0 1.6" stroke="#444" stroke-width="1.1" fill="none"/><path d="M7 6.5h11M7 9.5h11M7 12.5h11M7 15.5h7M7 18.5h7" stroke="#9ab0d0" stroke-width="1"/><path d="M9 5l-1 10M13 5l-1 10M6.5 8h9M6 12h9" stroke="#2cb82c" stroke-width="2.2"/><circle cx="17.5" cy="17" r="5.3" fill="#d42a2a" stroke="#a81818" stroke-width=".6"/><rect x="16.6" y="13.5" width="1.8" height="4.2" fill="#fff"/><rect x="16.6" y="18.6" width="1.8" height="1.6" fill="#fff"/></svg>
<svg style="position:absolute;left:1214px;top:554px" width="22" height="24" viewBox="0 0 22 24"><rect x="4.5" y=".8" width="16" height="21.4" fill="#fdfdfd" stroke="#1e1e1e" stroke-width="1.4"/><path d="M3 3.5q-2 .8 0 1.6M3 6.5q-2 .8 0 1.6M3 9.5q-2 .8 0 1.6M3 12.5q-2 .8 0 1.6M3 15.5q-2 .8 0 1.6M3 18.5q-2 .8 0 1.6" stroke="#222" stroke-width="1.3" fill="none"/><path d="M8 12.5h10M8 15.5h10M8 18.5h10" stroke="#c8c8d0" stroke-width=".8"/><path d="M9 5.5v6" stroke="#e42a2a" stroke-width="2"/><rect x="8" y="13" width="2" height="2" fill="#e42a2a"/><path d="M14.5 3.5v2M14.5 7v5" stroke="#2a4ee0" stroke-width="2"/><path d="M12.5 14.5q0-2.5 2.5-2.5t2.5 2.2q0 1.5-2 2.3v1.8" stroke="#9a3ab8" stroke-width="1.8" fill="none"/><rect x="14" y="19.5" width="2" height="1.8" fill="#9a3ab8"/></svg>
<svg style="position:absolute;left:1214px;top:589px" width="24" height="24" viewBox="0 0 24 24"><rect x="1" y="2" width="21" height="8" rx="2.5" fill="#d8dcdf" stroke="#6d7277" stroke-width=".8"/><rect x="2" y="7" width="19" height="2" fill="#9aa0a4"/><rect x="18" y="4" width="2" height="3" fill="#39c339"/><rect x="1" y="13" width="21" height="8" rx="2.5" fill="#d8dcdf" stroke="#6d7277" stroke-width=".8"/><rect x="2" y="18" width="19" height="2" fill="#9aa0a4"/><rect x="18" y="15" width="2" height="3" fill="#39c339"/><path d="M3 19l8-8h-3l3-3h6v6l-3 3v-3l-8 8z" fill="#31b531"/></svg>
<svg style="position:absolute;left:1215px;top:625px" width="23" height="23" viewBox="0 0 23 23"><defs><linearGradient id="gma" x1="0" y1="0" x2="0" y2="1"><stop offset="0" stop-color="#3b9fe0"/><stop offset="1" stop-color="#1a6fb8"/></linearGradient></defs><rect x=".5" y=".5" width="22" height="22" rx="2" fill="url(#gma)" stroke="#1a5a9a"/><path d="M5 10h7V6l6 5.5-6 5.5v-4H5z" fill="#fff"/></svg>
<svg style="position:absolute;left:1214px;top:663px" width="24" height="22" viewBox="0 0 24 22"><rect x="1" y="4" width="19" height="9" rx="2.5" fill="#d8dcdf" stroke="#6d7277" stroke-width=".8"/><rect x="2" y="10" width="17" height="2" fill="#9aa0a4"/><rect x="16" y="6" width="2" height="3" fill="#39c339"/><path d="M12 10l10 10M22 10L12 20" stroke="#e02020" stroke-width="2.6"/></svg>
<svg style="position:absolute;left:1214px;top:697px" width="23" height="24" viewBox="0 0 23 24"><rect x="1" y="1" width="21" height="21" rx="2" fill="#f2f4f6" stroke="#8d9399"/><rect x="4" y="5" width="15" height="12" fill="#fff" stroke="#b9bec3"/><path d="M7 9h9M7 12h9M7 15h9" stroke="#8aa0b8"/><rect x="8" y="19" width="7" height="2" fill="#3aa0e0"/></svg>
<svg style="position:absolute;left:1215px;top:734px" width="19" height="23" viewBox="0 0 19 23"><defs><linearGradient id="ghp" x1="0" y1="0" x2="1" y2="0"><stop offset="0" stop-color="#2a4fc0"/><stop offset=".25" stop-color="#3558c8"/><stop offset=".3" stop-color="#6a8ae6"/><stop offset="1" stop-color="#3b5cc8"/></linearGradient></defs><rect x=".6" y=".6" width="17.8" height="21.8" rx=".8" fill="url(#ghp)" stroke="#1d3590" stroke-width="1.2"/><path d="M6.5 7.5q0-3.5 3.5-3.5t3.5 3.3q0 2-2 3.2t-1.5 3.5" stroke="#e8ecf6" stroke-width="2.2" fill="none" stroke-linecap="round"/><circle cx="10" cy="17.5" r="1.4" fill="#e8ecf6"/></svg>
<div style="position:absolute;left:0px;top:1030px;width:1536px;height:32px;background:#f0f0f0"></div>
<div style="position:absolute;left:0px;top:1030px;width:1536px;height:1px;background:#e2e2e2"></div>
<div style="position:absolute;left:1222px;top:1033px;width:1px;height:29px;background:#dadada"></div>
<div style="position:absolute;left:1413px;top:1033px;width:1px;height:29px;background:#dadada"></div>
<div style="position:absolute;left:1534px;top:1033px;width:1px;height:29px;background:#dadada"></div>
<div style="position:absolute;left:1.5px;top:1040px;font-size:18px;line-height:18px;color:#111;white-space:pre;transform-origin:0 0;transform:scaleX(0.9412);">This action starts a wizard that guides you through configuring the cluster quorum settings.</div>
<div style="position:absolute;left:119px;top:167px;width:298px;height:394px;background:#f0f0f0;border:1px solid #d9d9d9;box-sizing:border-box"></div>
<div style="position:absolute;left:123.5px;top:401px;width:285px;height:32px;background:#91c9f7"></div>
<div style="position:absolute;left:164px;top:268px;width:248px;height:1px;background:#dedede"></div>
<div style="position:absolute;left:164px;top:310px;width:248px;height:1px;background:#dedede"></div>
<div style="position:absolute;left:164px;top:352px;width:248px;height:1px;background:#dedede"></div>
<div style="position:absolute;left:164px;top:394px;width:248px;height:1px;background:#dedede"></div>
<div style="position:absolute;left:164px;top:435px;width:248px;height:1px;background:#dedede"></div>
<div style="position:absolute;left:164px;top:477px;width:248px;height:1px;background:#dedede"></div>
<div style="position:absolute;left:164px;top:518px;width:248px;height:1px;background:#dedede"></div>
<div style="position:absolute;left:170px;top:179px;font-size:18px;line-height:18px;color:#222;white-space:pre;transform-origin:0 0;transform:scaleX(0.9254);">Configure Role<span style="letter-spacing:-1.8px">...</span></div>
<div style="position:absolute;left:170px;top:211px;font-size:18px;line-height:18px;color:#222;white-space:pre;transform-origin:0 0;transform:scaleX(0.9111);">Validate Cluster<span style="letter-spacing:-1.8px">...</span></div>
<div style="position:absolute;left:170px;top:242px;font-size:18px;line-height:18px;color:#222;white-space:pre;transform-origin:0 0;transform:scaleX(0.9255);">View Validation Report</div>
<div style="position:absolute;left:170px;top:284px;font-size:18px;line-height:18px;color:#222;white-space:pre;transform-origin:0 0;transform:scaleX(0.9457);">Add Node<span style="letter-spacing:-1.8px">...</span></div>
<div style="position:absolute;left:170px;top:325px;font-size:18px;line-height:18px;color:#222;white-space:pre;transform-origin:0 0;transform:scaleX(0.9100);">Close Connection</div>
<div style="position:absolute;left:170px;top:367px;font-size:18px;line-height:18px;color:#222;white-space:pre;transform-origin:0 0;transform:scaleX(0.8694);">Reset Recent Events</div>
<div style="position:absolute;left:170px;top:409px;font-size:18px;line-height:18px;color:#222;white-space:pre;transform-origin:0 0;transform:scaleX(0.9448);">More Actions</div>
<div style="position:absolute;left:170px;top:450px;font-size:18px;line-height:18px;color:#222;white-space:pre;transform-origin:0 0;transform:scaleX(0.8726);">Refresh</div>
<div style="position:absolute;left:170px;top:492px;font-size:18px;line-height:18px;color:#222;white-space:pre;transform-origin:0 0;transform:scaleX(0.9020);">Properties</div>
<div style="position:absolute;left:170px;top:533px;font-size:18px;line-height:18px;color:#222;white-space:pre;transform-origin:0 0;transform:scaleX(0.9116);">Help</div>
<svg style="position:absolute;left:393px;top:412px" width="6" height="10" viewBox="0 0 6 10"><path d="M1 1l4 4-4 4" stroke="#333" stroke-width="1.1" fill="none"/></svg>
<div style="position:absolute;left:408px;top:397px;width:400px;height:248px;background:#f2f2f2;border:1px solid #d9d9d9;box-sizing:border-box"></div>
<div style="position:absolute;left:412px;top:401px;width:392px;height:32px;background:#91c9f7"></div>
<div style="position:absolute;left:453px;top:435px;width:350px;height:1px;background:#dedede"></div>
<div style="position:absolute;left:453px;top:477px;width:350px;height:1px;background:#dedede"></div>
<div style="position:absolute;left:453px;top:518px;width:350px;height:1px;background:#dedede"></div>
<div style="position:absolute;left:453px;top:560px;width:350px;height:1px;background:#dedede"></div>
<div style="position:absolute;left:453px;top:601px;width:350px;height:1px;background:#dedede"></div>
<div style="position:absolute;left:458.8px;top:408px;font-size:18px;line-height:18px;color:#222;white-space:pre;transform-origin:0 0;transform:scaleX(0.9343);">Configure Cluster Quorum Settings<span style="letter-spacing:-1.8px">...</span></div>
<div style="position:absolute;left:458.8px;top:449px;font-size:18px;line-height:18px;color:#222;white-space:pre;transform-origin:0 0;transform:scaleX(0.8970);">Copy Cluster Roles<span style="letter-spacing:-1.8px">...</span></div>
<div style="position:absolute;left:458.8px;top:491px;font-size:18px;line-height:18px;color:#222;white-space:pre;transform-origin:0 0;transform:scaleX(0.9156);">Shut Down Cluster<span style="letter-spacing:-1.8px">...</span></div>
<div style="position:absolute;left:458.8px;top:533px;font-size:18px;line-height:18px;color:#222;white-space:pre;transform-origin:0 0;transform:scaleX(0.9107);">Destroy Cluster<span style="letter-spacing:-1.8px">...</span></div>
<div style="position:absolute;left:458.8px;top:575px;font-size:18px;line-height:18px;color:#222;white-space:pre;transform-origin:0 0;transform:scaleX(0.8901);">Move Core Cluster Resources</div>
<div style="position:absolute;left:458.8px;top:616px;font-size:18px;line-height:18px;color:#222;white-space:pre;transform-origin:0 0;transform:scaleX(0.9237);">Cluster-Aware Updating</div>
<svg style="position:absolute;left:785px;top:578px" width="6" height="10" viewBox="0 0 6 10"><path d="M1 1l4 4-4 4" stroke="#333" stroke-width="1.1" fill="none"/></svg>
</body></html>
